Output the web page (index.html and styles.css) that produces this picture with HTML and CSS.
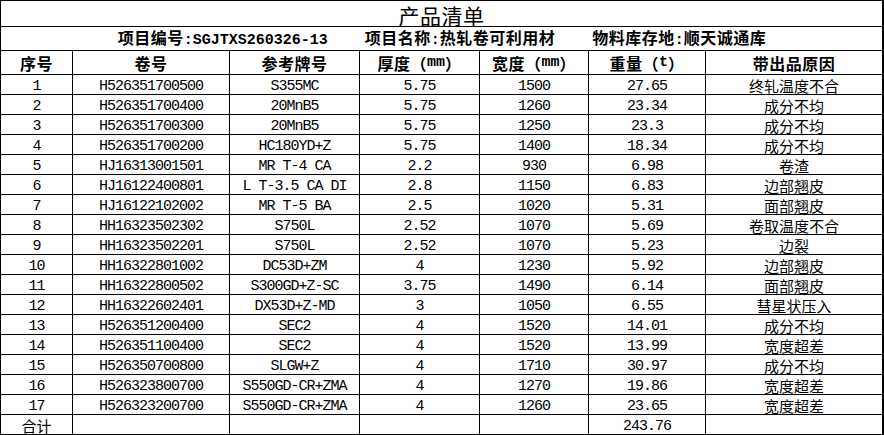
FILE: index.html
```html
<!DOCTYPE html>
<html lang="zh-CN">
<head>
<meta charset="utf-8">
<title>产品清单</title>
<link rel="stylesheet" href="styles.css">
</head>
<body>
<div class="sheet">
  <div class="cell title">产品清单</div>
  <div class="cell info">
    <span>项目编号<span class="lat">:SGJTXS260326-13</span></span>
    <span>项目名称<span class="lat">:</span>热轧卷可利用材</span>
    <span>物料库存地<span class="lat">:</span>顺天诚通库</span>
  </div>
  <div class="cell head">序号</div>
  <div class="cell head">卷号</div>
  <div class="cell head">参考牌号</div>
  <div class="cell head">厚度（<span class="unit">mm</span>）</div>
  <div class="cell head">宽度（<span class="unit">mm</span>）</div>
  <div class="cell head">重量（<span class="unit">t</span>）</div>
  <div class="cell head">带出品原因</div>

  <div class="cell">1</div><div class="cell">H526351700500</div><div class="cell">S355MC</div><div class="cell">5.75</div><div class="cell">1500</div><div class="cell">27.65</div><div class="cell cjk">终轧温度不合</div>
  <div class="cell">2</div><div class="cell">H526351700400</div><div class="cell">20MnB5</div><div class="cell">5.75</div><div class="cell">1260</div><div class="cell">23.34</div><div class="cell cjk">成分不均</div>
  <div class="cell">3</div><div class="cell">H526351700300</div><div class="cell">20MnB5</div><div class="cell">5.75</div><div class="cell">1250</div><div class="cell">23.3</div><div class="cell cjk">成分不均</div>
  <div class="cell">4</div><div class="cell">H526351700200</div><div class="cell">HC180YD+Z</div><div class="cell">5.75</div><div class="cell">1400</div><div class="cell">18.34</div><div class="cell cjk">成分不均</div>
  <div class="cell">5</div><div class="cell">HJ16313001501</div><div class="cell">MR T-4 CA</div><div class="cell">2.2</div><div class="cell">930</div><div class="cell">6.98</div><div class="cell cjk">卷渣</div>
  <div class="cell">6</div><div class="cell">HJ16122400801</div><div class="cell">L T-3.5 CA DI</div><div class="cell">2.8</div><div class="cell">1150</div><div class="cell">6.83</div><div class="cell cjk">边部翘皮</div>
  <div class="cell">7</div><div class="cell">HJ16122102002</div><div class="cell">MR T-5 BA</div><div class="cell">2.5</div><div class="cell">1020</div><div class="cell">5.31</div><div class="cell cjk">面部翘皮</div>
  <div class="cell">8</div><div class="cell">HH16323502302</div><div class="cell">S750L</div><div class="cell">2.52</div><div class="cell">1070</div><div class="cell">5.69</div><div class="cell cjk">卷取温度不合</div>
  <div class="cell">9</div><div class="cell">HH16323502201</div><div class="cell">S750L</div><div class="cell">2.52</div><div class="cell">1070</div><div class="cell">5.23</div><div class="cell cjk">边裂</div>
  <div class="cell">10</div><div class="cell">HH16322801002</div><div class="cell">DC53D+ZM</div><div class="cell">4</div><div class="cell">1230</div><div class="cell">5.92</div><div class="cell cjk">边部翘皮</div>
  <div class="cell">11</div><div class="cell">HH16322800502</div><div class="cell">S300GD+Z-SC</div><div class="cell">3.75</div><div class="cell">1490</div><div class="cell">6.14</div><div class="cell cjk">面部翘皮</div>
  <div class="cell">12</div><div class="cell">HH16322602401</div><div class="cell">DX53D+Z-MD</div><div class="cell">3</div><div class="cell">1050</div><div class="cell">6.55</div><div class="cell cjk">彗星状压入</div>
  <div class="cell">13</div><div class="cell">H526351200400</div><div class="cell">SEC2</div><div class="cell">4</div><div class="cell">1520</div><div class="cell">14.01</div><div class="cell cjk">成分不均</div>
  <div class="cell">14</div><div class="cell">H526351100400</div><div class="cell">SEC2</div><div class="cell">4</div><div class="cell">1520</div><div class="cell">13.99</div><div class="cell cjk">宽度超差</div>
  <div class="cell">15</div><div class="cell">H526350700800</div><div class="cell">SLGW+Z</div><div class="cell">4</div><div class="cell">1710</div><div class="cell">30.97</div><div class="cell cjk">成分不均</div>
  <div class="cell">16</div><div class="cell">H526323800700</div><div class="cell">S550GD-CR+ZMA</div><div class="cell">4</div><div class="cell">1270</div><div class="cell">19.86</div><div class="cell cjk">宽度超差</div>
  <div class="cell">17</div><div class="cell">H526323200700</div><div class="cell">S550GD-CR+ZMA</div><div class="cell">4</div><div class="cell">1260</div><div class="cell">23.65</div><div class="cell cjk">宽度超差</div>

  <div class="cell cjk">合计</div><div class="cell"></div><div class="cell"></div><div class="cell"></div><div class="cell"></div><div class="cell">243.76</div><div class="cell"></div>
</div>
</body>
</html>
```
FILE: styles.css
```css
html, body {
  margin: 0;
  padding: 0;
  background: #fff;
}

.sheet {
  box-sizing: border-box;
  width: 884px;
  height: 435px;
  display: grid;
  grid-template-columns: 71px 156px 129px 119px 108px 116px 176px;
  grid-template-rows: 25px 23px 23px repeat(18, 19px);
  gap: 1px;
  padding: 1px 2px 1px 1px;
  background: #000;
}

.cell {
  background: #fff;
  display: flex;
  align-items: center;
  justify-content: center;
  white-space: pre;
  color: #000;
  font-family: "Liberation Mono", "Noto Sans CJK SC", monospace;
  font-size: 15px;
  letter-spacing: -1px;
  line-height: 15px;
  padding-top: 3px;
  box-sizing: border-box;
}

.cjk {
  font-family: "Noto Sans CJK SC", sans-serif;
  letter-spacing: 0;
  font-size: 15px;
  line-height: 15px;
  padding-top: 1px;
}

.title {
  grid-column: 1 / -1;
  font-family: "Noto Sans CJK SC", sans-serif;
  font-size: 21px;
  letter-spacing: 0.5px;
  line-height: 21px;
  padding-top: 3px;
}

.info {
  grid-column: 1 / -1;
  gap: 37px;
  font-family: "Noto Sans CJK SC", sans-serif;
  font-weight: bold;
  font-size: 16px;
  letter-spacing: 0.5px;
  line-height: 16px;
  padding-top: 1px;
  padding-left: 1px;
}

.lat {
  font-family: "Liberation Mono", monospace;
  font-size: 15px;
  letter-spacing: 0;
}

.head {
  font-family: "Noto Sans CJK SC", sans-serif;
  font-weight: bold;
  font-size: 16px;
  letter-spacing: 0.5px;
  line-height: 16px;
  padding-top: 1px;
}

.unit {
  font-family: "Liberation Mono", monospace;
  font-size: 15px;
  font-weight: bold;
  letter-spacing: 0;
  vertical-align: 2px;
}
```
